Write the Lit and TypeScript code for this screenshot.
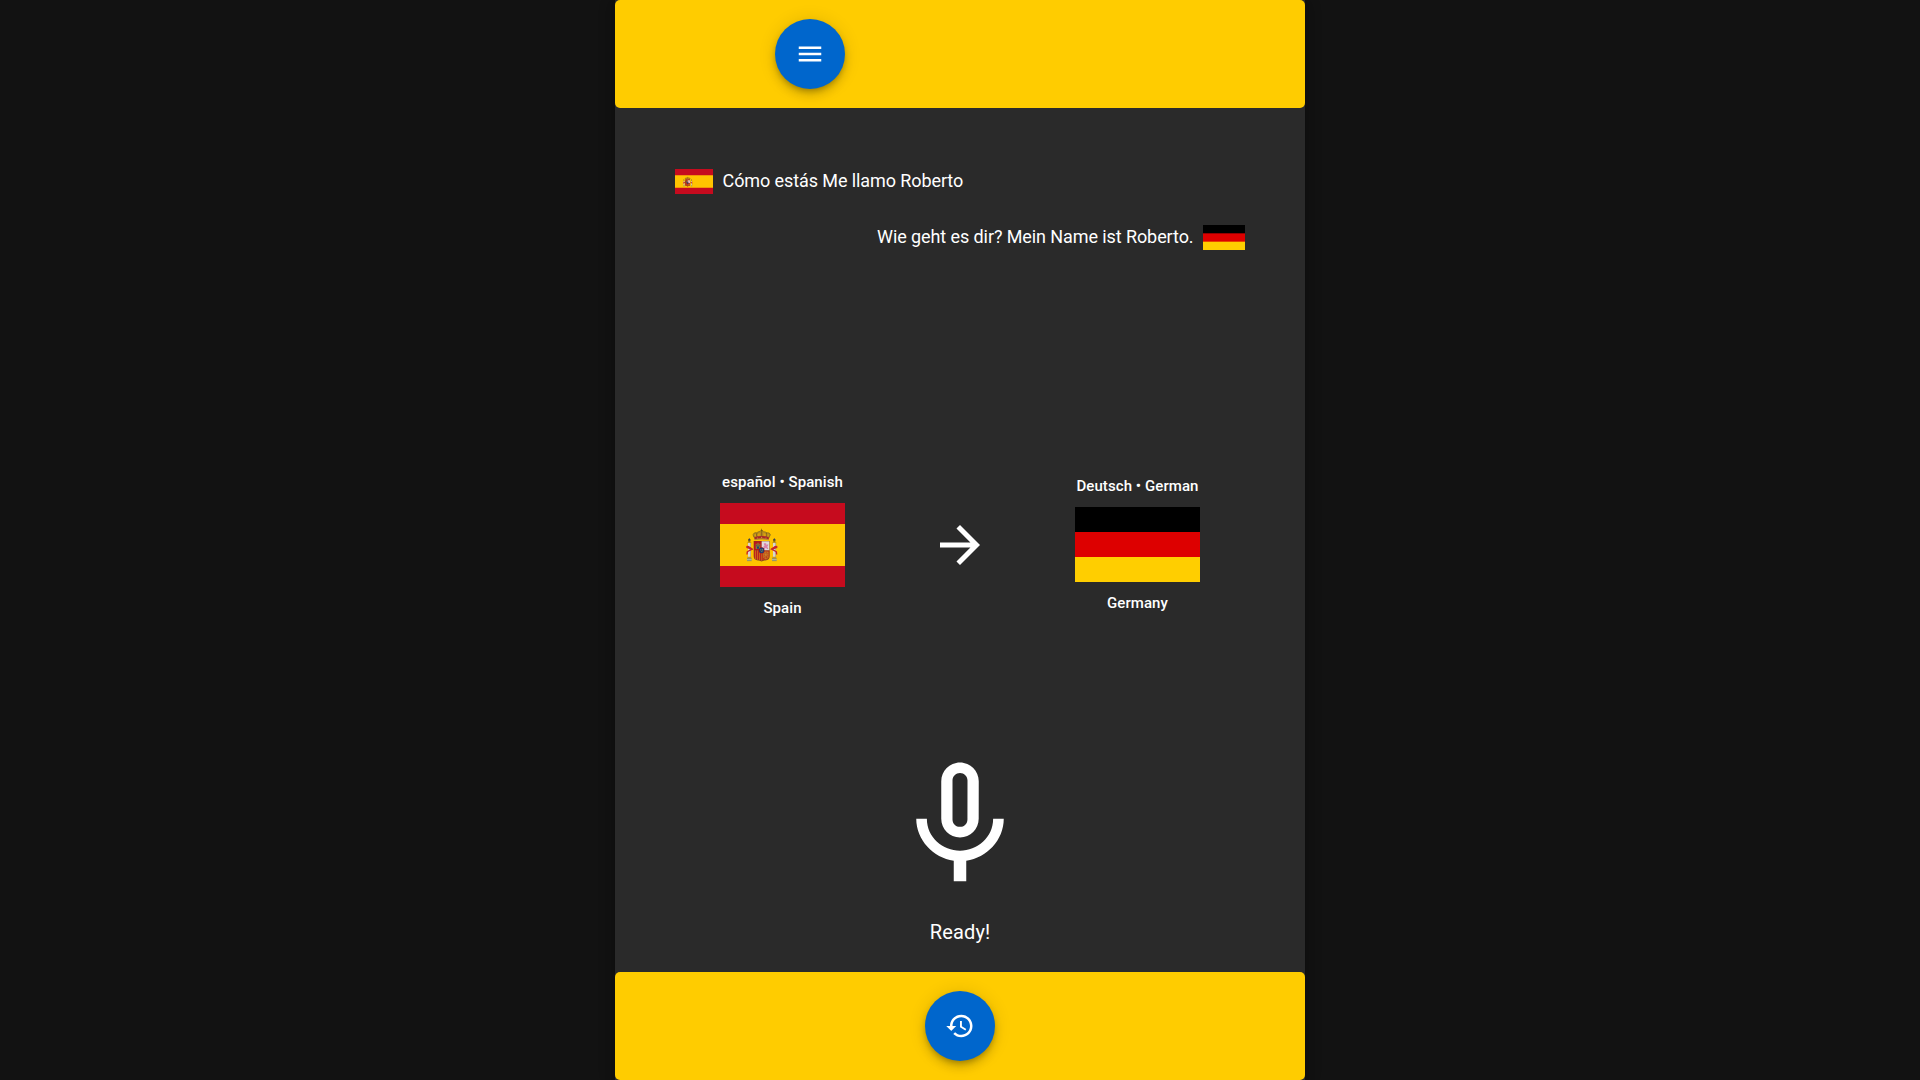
import { LitElement, html, css, svg } from "lit";
import { customElement, property } from "lit/decorators.js";

const ICONS: Record<string, string> = {
  menu: "M3 18h18v-2H3v2zm0-5h18v-2H3v2zm0-7v2h18V6H3z",
  history:
    "M13 3c-4.97 0-9 4.03-9 9H1l3.89 3.89.07.14L9 12H6c0-3.87 3.13-7 7-7s7 3.13 7 7-3.13 7-7 7c-1.93 0-3.68-.79-4.94-2.06l-1.42 1.42C8.27 19.99 10.51 21 13 21c4.97 0 9-4.03 9-9s-4.03-9-9-9zm-1 5v5l4.28 2.54.72-1.21-3.5-2.08V8H12z",
  forward: "M12 4l-1.41 1.41L16.17 11H4v2h12.17l-5.58 5.59L12 20l8-8z",
  mic: "M12 14c1.66 0 2.99-1.34 2.99-3L15 5c0-1.66-1.34-3-3-3S9 3.34 9 5v6c0 1.66 1.34 3 3 3zm-1.2-9.1c0-.66.54-1.2 1.2-1.2.66 0 1.2.54 1.2 1.2l-.01 6.2c0 .66-.53 1.2-1.19 1.2-.66 0-1.2-.54-1.2-1.2V4.9zm6.5 6.1c0 3-2.54 5.1-5.3 5.1S6.7 14 6.7 11H5c0 3.41 2.72 6.23 6 6.72V21h2v-3.28c3.28-.48 6-3.3 6-6.72h-1.7z",
};

@customElement("app-icon")
class AppIcon extends LitElement {
  @property() name = "menu";
  static styles = css`
    :host { display: block; }
    svg { display: block; width: 100%; height: 100%; fill: #fff; }
  `;
  render() {
    return html`<svg viewBox="0 0 24 24"><path d=${ICONS[this.name]} /></svg>`;
  }
}

const pillar = svg`
  <path d="M0 10h12v3H0z" fill="#a9852b"/>
  <path d="M2 2l4-3 4 3-1 6H3z" fill="#6d5a1e"/>
  <circle cx="6" cy="1" r="2" fill="#27396b"/>
  <rect x="2" y="12" width="8" height="42" fill="#d9d6cf"/>
  <rect x="8" y="12" width="2" height="42" fill="#a5a39d"/>
  <rect x="0" y="53" width="12" height="4" fill="#c0962d"/>
  <rect x="-1" y="57" width="14" height="9" fill="#8d8f62"/>
  <path d="M-1 61h14v2H-1z" fill="#d5d5bd"/>`;

const emblem = svg`
  <g transform="translate(82 107)">${pillar}</g>
  <g transform="translate(157 107)">${pillar}</g>
  <path d="M79 128q5-3 12 3l8 5v4l-9-2-11-4zM80 144l13-8 3 4-12 6-1 7h-4z" fill="#c4242b"/>
  <path d="M172 128q-5-3-12 3l-8 5v4l9-2 11-4zM171 144l-13-8-3 4 12 6 1 7h4z" fill="#c4242b"/>
  <path d="M104 109L99 95q1-7 12-7 6-4 14-4t14 4q11 0 12 7l-5 14q-21-5-42 0z" fill="#b98a1d"/>
  <path d="M107 103l-4-8q2-3 6-3zM143 103l4-8q-2-3-6-3zM114 101q-3-6 1-10l6-1q-3 6-1 11zM136 101q3-6-1-10l-6-1q3 6 1 11z" fill="#d8a30f"/>
  <path d="M104 105L99 95q1-7 12-7 6-4 14-4t14 4q11 0 12 7l-5 10"
    fill="none" stroke="#6f5c1e" stroke-width="2.4" stroke-dasharray="3 1.2"/>
  <path d="M112 102q-5-7-1-13M138 102q5-7 1-13M125 101V86" fill="none" stroke="#74591b" stroke-width="2.2"/>
  <path d="M104 101q21-6 42 0v8q-21-5-42 0z" fill="#a8262a"/>
  <path d="M104 108q21-6 42 0v3q-21-5-42 0z" fill="#b68a2c"/>
  <path d="M122 80h6v3h-6zM124 77h2v8h-2z" fill="#715817"/>
  <circle cx="112" cy="104" r="1.6" fill="#d5a636"/><circle cx="125" cy="102" r="1.8" fill="#d5a636"/><circle cx="138" cy="104" r="1.6" fill="#d5a636"/>
  <path d="M101 113h48v45q0 13-13 13h-3l-8 3-8-3h-3q-13 0-13-13z" fill="#7d4c22"/>
  <path d="M102 114h23v27h-23z" fill="#b8151d"/>
  <path d="M125 114h23v27h-23z" fill="#e2dadd"/>
  <path d="M102 141h23v31l-8-3h-3q-12 0-12-12z" fill="#b8151d"/>
  <path d="M106 141v27M112 141v28M118 141v29M124 141v31" stroke="#dba41d" stroke-width="2"/>
  <path d="M125 141h23v16q0 12-12 12h-3l-8 3z" fill="#bd3a1b"/>
  <path d="M107 137v-16h3v3h2v-6h4v6h2v-3h3v16z" fill="#8c7d30"/>
  <path d="M111 136v-6q3-3 6 0v6zM109 126h3v3h-3zM116 126h3v3h-3z" fill="#23417a"/>
  <path d="M131 121l4-2 4 2 1 5 4-4 1 3-3 5 3 7h-4l-3-4-5 4h-4l4-6-4-3 5-1z" fill="#d982a8"/>
  <path d="M131 146h13v16l-6 5-7-5zM131 146l13 16M144 146l-13 16M137 145v22M130 154h15" fill="none" stroke="#c98d27" stroke-width="1.8"/>
  <ellipse cx="125" cy="141" rx="8.4" ry="9" fill="#8d1c26"/>
  <ellipse cx="125" cy="141" rx="7" ry="7.8" fill="#1b3f7c"/>
  <path d="M121 138h3v3h-3zM126 138h3v3h-3zM124 143h3v3h-3z" fill="#8e8a4c"/>`;

@customElement("country-flag")
class CountryFlag extends LitElement {
  @property() country = "es";
  static styles = css`
    :host { display: block; }
    svg { display: block; width: 100%; height: 100%; }
  `;
  render() {
    return this.country === "es"
      ? html`<svg viewBox="0 0 375 250" preserveAspectRatio="none">
          <rect width="375" height="250" fill="#c60b1e" />
          <rect y="62.5" width="375" height="125" fill="#ffc400" />
          ${emblem}
        </svg>`
      : html`<svg viewBox="0 0 5 3" preserveAspectRatio="none">
          <rect width="5" height="3" fill="#000" />
          <rect y="1" width="5" height="2" fill="#d00" />
          <rect y="2" width="5" height="1" fill="#ffce00" />
        </svg>`;
  }
}

@customElement("app-root")
class AppRoot extends LitElement {
  static styles = css`
    :host {
      display: flex;
      justify-content: center;
      height: 100vh;
      background: #121212;
      color: #fff;
      font-family: Roboto, sans-serif;
    }
    .panel {
      width: 690px;
      height: 100%;
      display: flex;
      flex-direction: column;
      background: #2a2a2a;
      box-shadow: 0 3px 5px -1px rgba(0, 0, 0, 0.2), 0 6px 10px rgba(0, 0, 0, 0.14), 0 1px 18px rgba(0, 0, 0, 0.12);
    }
    .bar {
      height: 108px;
      flex: none;
      box-sizing: border-box;
      display: flex;
      align-items: center;
      justify-content: center;
      background: #fc0;
      border-radius: 5px;
    }
    .top { justify-content: flex-start; padding-left: 160px; }
    .fab {
      width: 70px;
      height: 70px;
      padding: 0;
      border: 0;
      border-radius: 50%;
      display: grid;
      place-items: center;
      background: #06c;
      box-shadow: 0 3px 5px -1px rgba(0, 0, 0, 0.2), 0 6px 10px rgba(0, 0, 0, 0.14), 0 1px 18px rgba(0, 0, 0, 0.12);
    }
    .fab app-icon { width: 30px; height: 30px; }
    .body {
      flex: 1;
      min-height: 0;
      display: flex;
      flex-direction: column;
    }
    .chat {
      height: 334px;
      flex: none;
      box-sizing: border-box;
      padding: 61px 60px 0;
      display: flex;
      flex-direction: column;
      gap: 31px;
    }
    .line {
      display: flex;
      align-items: center;
      gap: 9.5px;
      height: 25px;
      font-size: 18px;
      letter-spacing: -0.09px;
      line-height: 23px;
      white-space: nowrap;
    }
    .line span { padding-bottom: 2px; }
    .reply { justify-content: flex-end; }
    .mini-es { width: 38px; height: 25px; }
    .mini-de { width: 42px; height: 25px; }
    .pair {
      height: 205px;
      flex: none;
      display: grid;
      grid-template-columns: 125px 60px 125px;
      justify-content: space-between;
      align-items: center;
      padding: 0 105px;
    }
    .lang {
      display: flex;
      flex-direction: column;
      align-items: center;
      gap: 10px;
      font-size: 15px;
      font-weight: 500;
      letter-spacing: 0.08px;
      line-height: 22px;
      white-space: nowrap;
    }
    .flag-es { width: 125px; height: 84px; }
    .flag-de { width: 125px; height: 75px; }
    .arrow { width: 60px; height: 60px; }
    .speak {
      flex: 1;
      display: flex;
      flex-direction: column;
      align-items: center;
      justify-content: flex-end;
      gap: 20px;
      padding-bottom: 28px;
      font-size: 20px;
      letter-spacing: 0.15px;
      line-height: 24px;
    }
    .mic { width: 150px; height: 150px; }
  `;
  render() {
    return html`
      <main class="panel">
        <header class="bar top">
          <button class="fab" aria-label="Menu"><app-icon name="menu"></app-icon></button>
        </header>
        <section class="body">
          <div class="chat">
            <div class="line">
              <country-flag class="mini-es" country="es"></country-flag><span>Cómo estás Me llamo Roberto</span>
            </div>
            <div class="line reply">
              <span>Wie geht es dir? Mein Name ist Roberto.</span><country-flag class="mini-de" country="de"></country-flag>
            </div>
          </div>
          <div class="pair">
            <div class="lang">
              <span>español • Spanish</span>
              <country-flag class="flag-es" country="es"></country-flag>
              <span>Spain</span>
            </div>
            <app-icon class="arrow" name="forward"></app-icon>
            <div class="lang">
              <span>Deutsch • German</span>
              <country-flag class="flag-de" country="de"></country-flag>
              <span>Germany</span>
            </div>
          </div>
          <div class="speak">
            <app-icon class="mic" name="mic"></app-icon>
            <span>Ready!</span>
          </div>
        </section>
        <footer class="bar">
          <button class="fab" aria-label="History"><app-icon name="history"></app-icon></button>
        </footer>
      </main>
    `;
  }
}
